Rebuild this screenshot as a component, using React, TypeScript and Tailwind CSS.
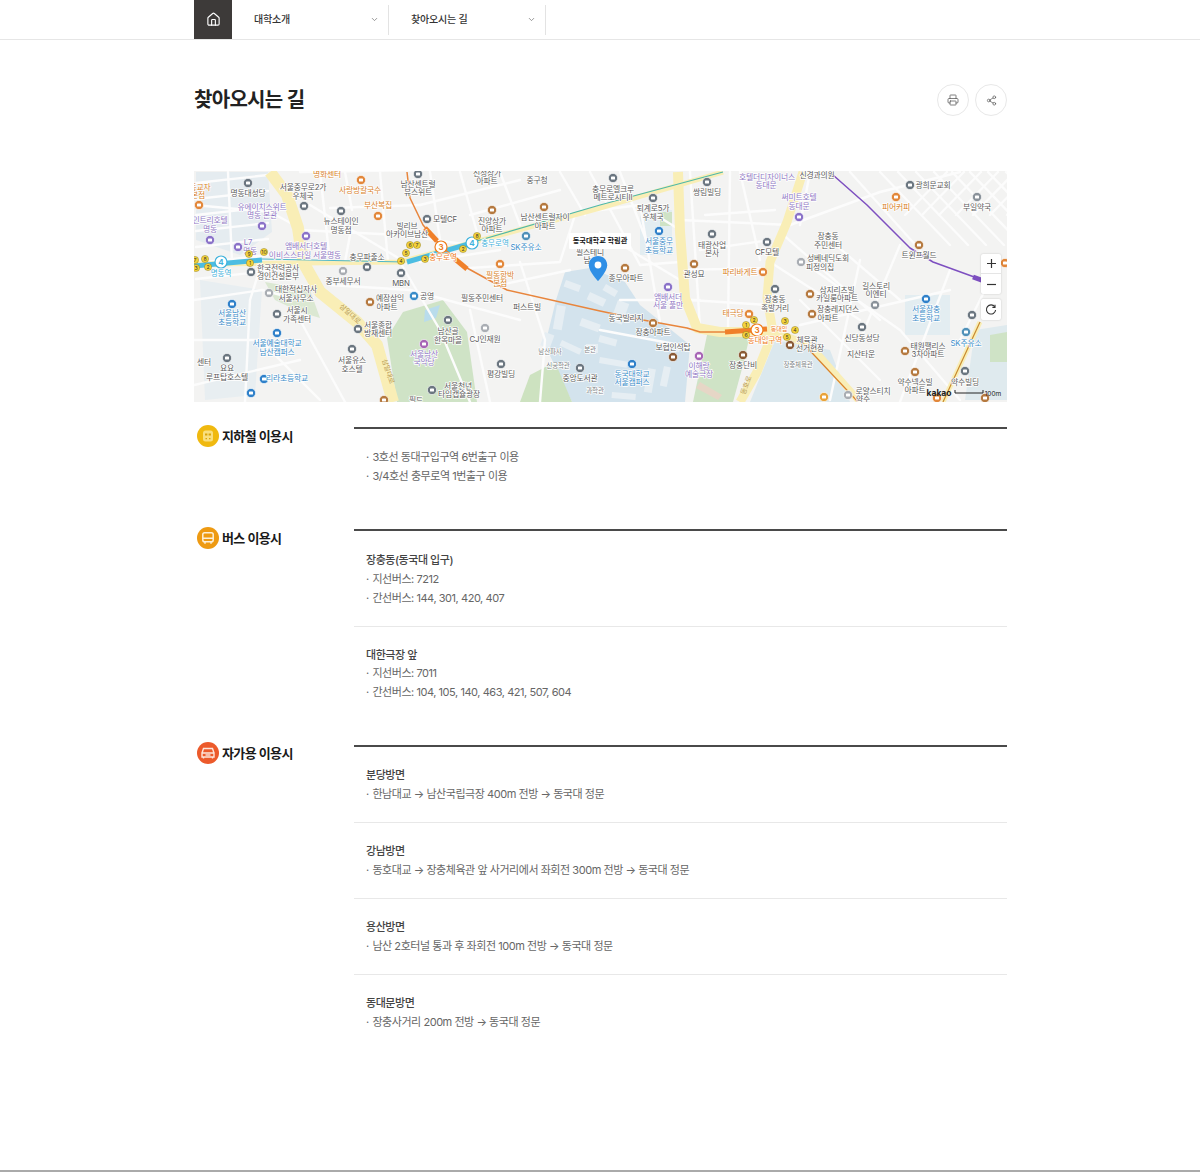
import { ChevronDown, House, Printer, Share2 } from 'lucide-react'
import type { ReactNode } from 'react'

const FONT = 'Inter, "Noto Sans CJK KR", "Noto Sans", sans-serif'

const GRAY = '#5a5a5a'
const ORANGE = '#d9822b'
const PURPLE = '#8f78c4'
const BLUE = '#3a8cc9'

// [x, y, text, color]
const labels: [number, number, string, string?][] = [
  [327, 174, '명화센터', ORANGE], [200, 187, '동교자', ORANGE], [198, 195, '본점', ORANGE],
  [248, 193, '명동대성당'], [303, 187, '서울중무로2가'], [303, 196, '우체국'],
  [360, 190, '사랑방칼국수', ORANGE], [418, 184, '남산센트럴'], [418, 192, '뷰스위트'],
  [487, 173, '신성상가'], [487, 181, '아파트'], [537, 180, '중구청'],
  [378, 205, '부산복집', ORANGE], [262, 207, '유에이치스위트', PURPLE], [262, 215, '명동 본관', PURPLE],
  [210, 220, '인트리호텔', PURPLE], [210, 229, '명동', PURPLE], [341, 221, '뉴스테이인'], [341, 230, '명동점'],
  [445, 219, '모텔CF'], [407, 226, '빌리브'], [407, 234, '아카이브남산'],
  [492, 221, '진양상가'], [492, 229, '아파트'], [545, 217, '남산센트럴자이'], [545, 226, '아파트'],
  [248, 242, 'L7', PURPLE], [250, 251, '명동', PURPLE], [306, 246, '앰배서더호텔', PURPLE],
  [305, 255, '이비스스타일 서울명동', PURPLE], [367, 257, '충무파출소'],
  [278, 268, '한국전력공사'], [278, 276, '경인건설본부'], [343, 281, '중부세무서'], [401, 283, 'MBN'],
  [526, 247, 'SK주유소', BLUE], [500, 275, '필동함박', ORANGE], [500, 283, '본점', ORANGE],
  [296, 289, '대한적십자사'], [296, 298, '서울사무소'], [390, 298, '예장삼익'], [387, 307, '아파트'],
  [427, 296, '공영'], [482, 298, '필동주민센터'], [527, 307, '퍼스트빌'],
  [232, 313, '서울남산', BLUE], [232, 322, '초등학교', BLUE], [297, 310, '서울시'], [297, 319, '가족센터'],
  [277, 343, '서울예술대학교', BLUE], [277, 352, '남산캠퍼스', BLUE],
  [378, 325, '서울종합'], [378, 333, '방재센터'], [448, 331, '남산골'], [448, 340, '한옥마을'],
  [485, 339, 'CJ인재원'], [424, 354, '서울남산', PURPLE], [424, 362, '국악당', PURPLE],
  [352, 360, '서울유스'], [352, 369, '호스텔'], [204, 362, '센터'], [227, 368, '요요'], [227, 377, '루프탑호스텔'],
  [287, 378, '리라초등학교', BLUE], [501, 374, '평강빌딩'], [458, 386, '서울천년'], [459, 394, '타임캡슐광장'],
  [416, 400, '필드'], [580, 378, '중앙도서관'],
  [767, 177, '호텔더디자이너스', PURPLE], [766, 185, '동대문', PURPLE], [817, 175, '신경과의원'],
  [707, 192, '쌍림빌딩'], [613, 189, '충무로엘크루'], [613, 197, '메트로시티II'],
  [653, 208, '퇴계로5가'], [653, 217, '우체국'], [799, 197, '써미트호텔', PURPLE], [799, 206, '동대문', PURPLE],
  [896, 207, '피어커피', ORANGE], [933, 185, '광희문교회'], [977, 207, '부일약국'],
  [659, 241, '서울중무', BLUE], [659, 250, '초등학교', BLUE], [712, 245, '태광산업'], [712, 253, '본사'],
  [767, 252, 'CF모텔'], [828, 236, '장충동'], [828, 245, '주민센터'], [828, 258, '성베네딕도회'], [820, 267, '피정의집'],
  [919, 255, '트윈프월드'], [694, 274, '관성묘'], [740, 272, '파리바게트', ORANGE],
  [668, 297, '앰배서더', PURPLE], [668, 305, '서울 풀만', PURPLE], [626, 278, '종무아파트'],
  [775, 299, '장충동'], [775, 308, '족발거리'], [837, 290, '삼지리츠빌'], [837, 298, '카일룸아파트'],
  [876, 286, '길스토리'], [876, 294, '이엔티'], [838, 309, '장충레지던스'], [828, 318, '아파트'],
  [926, 309, '서울장충', BLUE], [926, 318, '초등학교', BLUE], [626, 318, '동국빌리지'], [653, 332, '장충아파트'],
  [733, 313, '태극당', ORANGE], [862, 338, '신당동성당'], [861, 354, '지산타운'],
  [928, 346, '태원팰리스'], [928, 354, '3차아파트'], [966, 343, 'SK주유소', BLUE], [673, 347, '보협인석탑'],
  [699, 366, '이해랑', PURPLE], [699, 374, '예술극장', PURPLE], [743, 365, '장충단비'],
  [807, 340, '체육관'], [810, 348, '선거현장'], [632, 374, '동국대학교', BLUE], [632, 382, '서울캠퍼스', BLUE],
  [915, 382, '약수넥스빌'], [915, 390, '아파트'], [965, 382, '약수빌딩'], [873, 391, '로얄스티치'], [863, 399, '약수'],
  [590, 252, '필스테니'], [587, 260, '남'],
]

const smallLabels: [number, number, string][] = [
  [550, 351, '남산파사'], [590, 349, '본관'], [558, 365, '신공학관'], [595, 390, '과학관'], [798, 364, '장충체육관'],
]

// [x, y, color]
const pois: [number, number, string][] = [
  [248, 183, '#6b7680'], [304, 206, '#6b7680'], [361, 180, '#e2873a'], [418, 174, '#6b7680'],
  [378, 216, '#e2873a'], [262, 226, '#8a72c8'], [210, 240, '#8a72c8'], [199, 205, '#e2873a'], [341, 211, '#6b7680'],
  [427, 219, '#6b7680'], [492, 210, '#b5793f'], [544, 207, '#b5793f'], [238, 247, '#8a72c8'], [306, 236, '#8a72c8'],
  [367, 267, '#6b7680'], [251, 272, '#6b7680'], [343, 271, '#a9adb3'], [401, 273, '#6b7680'], [526, 236, '#4f90b8'],
  [500, 264, '#e2873a'], [269, 293, '#a9adb3'], [370, 302, '#b5793f'], [414, 296, '#3a8cc9'], [232, 304, '#2f80c9'],
  [277, 314, '#6b7680'], [277, 333, '#2f80c9'], [358, 329, '#6b7680'], [448, 320, '#6b7680'], [485, 328, '#a9adb3'],
  [424, 344, '#a765b5'], [352, 349, '#6b7680'], [227, 358, '#6b7680'], [264, 379, '#2f80c9'], [501, 364, '#6b7680'],
  [432, 390, '#6b7680'], [251, 393, '#2f80c9'], [580, 368, '#6b7680'], [384, 400, '#b5793f'],
  [707, 182, '#6b7680'], [613, 178, '#6b7680'], [653, 198, '#6b7680'], [799, 217, '#8a72c8'], [896, 197, '#e2873a'],
  [910, 185, '#6b7680'], [977, 197, '#8a929a'], [659, 231, '#2f80c9'], [712, 234, '#6b7680'], [767, 242, '#6b7680'],
  [801, 262, '#a9adb3'], [919, 245, '#b5793f'], [694, 264, '#b5793f'], [763, 272, '#e2873a'], [668, 287, '#8a72c8'],
  [625, 268, '#b5793f'], [775, 289, '#6b7680'], [810, 294, '#b5793f'], [875, 305, '#8a929a'], [812, 314, '#b5793f'],
  [926, 299, '#2f80c9'], [653, 323, '#b5793f'], [749, 314, '#e2873a'], [862, 327, '#6b7680'], [905, 351, '#b5793f'],
  [966, 332, '#4f90b8'], [673, 357, '#8a5a35'], [699, 356, '#a765b5'], [743, 355, '#8a5a35'], [790, 345, '#8a5a35'],
  [632, 364, '#2f80c9'], [915, 372, '#b5793f'], [965, 371, '#6b7680'], [848, 395, '#a9adb3'], [824, 397, '#e8a33a'],
  [937, 398, '#e2873a'], [985, 398, '#b5793f'], [1005, 263, '#e2873a'], [972, 315, '#6b7680'],
]

// [x, y, number]
const exits: [number, number, number][] = [
  [195, 260, 7], [205, 259, 8], [208, 267, 2], [196, 268, 3], [249, 254, 9], [264, 252, 10], [250, 263, 1],
  [401, 261, 4], [406, 253, 5], [410, 245, 6], [417, 245, 7], [425, 259, 3], [463, 249, 2], [477, 236, 8],
  [746, 325, 1], [754, 320, 2], [746, 335, 6], [785, 321, 3], [795, 330, 4], [787, 337, 5],
]

const streets = [
  'M194 205 L270 212 L300 228', 'M194 300 L262 290 L300 300', 'M228 172 L232 262', 'M262 262 L250 300 L245 402',
  'M300 230 L400 235 L470 245', 'M320 172 L330 262', 'M380 172 L388 262', 'M430 172 L440 240', 'M460 172 L478 236',
  'M500 172 L520 225', 'M560 172 L585 215', 'M330 208 L420 205', 'M300 172 L420 170', 'M400 262 L440 330 L470 402',
  'M330 285 L410 290 L520 320', 'M470 268 L560 262 L575 215', 'M520 262 L545 340 L540 402', 'M560 215 L640 205 L680 230',
  'M590 172 L640 265', 'M620 172 L650 250', 'M640 265 L680 262', 'M600 232 L680 280', 'M640 205 L660 322',
  'M690 172 L700 328', 'M730 172 L728 330', 'M680 220 L790 225', 'M680 270 L770 268', 'M690 300 L768 305',
  'M790 225 L880 192 L960 172', 'M800 260 L900 330 L960 400', 'M830 240 L900 300', 'M770 262 L860 320', 'M850 172 L920 250',
  'M800 300 L880 380', 'M860 260 L830 400', 'M900 245 L860 340', 'M950 270 L900 402', 'M990 280 L960 340', 'M800 325 L950 290',
  'M780 232 L880 320', 'M194 340 L260 340 L320 400', 'M300 320 L345 402', 'M194 385 L300 360', 'M600 330 L680 345', 'M620 300 L700 300',
  'M310 205 L405 262', 'M345 172 L352 210', 'M350 235 L345 262', 'M420 262 L500 250', 'M500 285 L570 270', 'M470 310 L490 402',
  'M520 180 L420 205', 'M560 190 L470 215', 'M740 172 L760 260', 'M705 215 L775 210', 'M700 250 L770 240', 'M810 172 L800 225',
]

// Parallel back streets of the Sindang blocks, top right of the map
const hatchA = Array.from({ length: 9 }, (_, i) => {
  const x = 905 + i * 17
  return `M${x} 215 L${x + 42} 172`
})
const hatchB = Array.from({ length: 8 }, (_, i) => {
  const x = 880 + i * 18
  return `M${x} 172 L${x + 70} 245`
})
const hatchC = Array.from({ length: 7 }, (_, i) => {
  const y = 175 + i * 16
  return `M196 ${y + 8} L268 ${y}`
})

const buildings: [number, number, number, number, number][] = [
  [566, 280, 16, 7, 20], [590, 292, 18, 8, 25], [606, 284, 14, 7, 30], [618, 300, 12, 22, 20], [582, 318, 20, 8, 20],
  [600, 335, 18, 7, 15], [557, 305, 9, 24, 10], [586, 344, 12, 9, 0], [600, 357, 28, 6, 10], [648, 368, 8, 24, 10],
  [664, 366, 7, 20, 12], [612, 392, 24, 6, 5], [562, 340, 22, 6, 25], [545, 332, 10, 14, 20], [660, 340, 22, 5, 20],
]

function StationBadge({ x, y, n, color }: { x: number; y: number; n: number; color: string }) {
  return (
    <g>
      <circle cx={x} cy={y} r={6} fill="#fff" stroke={color} strokeWidth={1.2} />
      <text x={x} y={y + 2.8} fontSize={8} textAnchor="middle" fill={color} fontWeight={700}>{n}</text>
    </g>
  )
}

function KakaoMap() {
  return (
    <div className="relative h-[231px] overflow-hidden">
      <svg viewBox="194 171 813 231" className="block h-full w-full" style={{ fontFamily: FONT }}>
        <rect x="194" y="171" width="813" height="231" fill="#f3f3f2" />

        {/* water / blocks */}
        <path d="M196 172 L268 172 L272 232 L240 255 L196 240 Z" fill="#e5ecf0" />
        <path d="M200 280 L262 290 L255 395 L205 400 Z" fill="#e8eef1" />
        <path d="M565 272 L590 268 L625 282 L640 305 L690 345 L685 402 L572 402 L545 345 L556 300 Z" fill="#d3e3ed" />
        <path d="M640 210 L672 210 L672 255 L640 255 Z" fill="#e3edf1" />
        <path d="M775 340 L830 350 L850 402 L750 402 Z" fill="#dbe8ee" />
        <path d="M905 295 L950 295 L950 335 L905 335 Z" fill="#e3edf1" />
        <path d="M975 330 L1007 325 L1007 400 L965 400 Z" fill="#dfeaee" />

        {/* parks */}
        <path d="M387 338 L403 312 L443 300 L467 332 L477 402 L397 402 Z" fill="#cfe3c6" />
        <path d="M425 310 L440 305 L436 318 L424 322 Z" fill="#b9dcec" />
        <path d="M520 402 L530 375 L555 362 L572 402 Z" fill="#cde2c0" />
        <path d="M707 335 L750 335 L743 365 L733 402 L693 402 Z" fill="#cfe3c6" />
        <path d="M700 382 L722 395 L718 400 L696 388 Z" fill="#e6d6c6" />
        <path d="M660 212 L672 212 L672 226 L660 226 Z" fill="#cfe3c6" />
        <path d="M265 282 L310 290 L320 318 L300 312 L275 300 Z" fill="#dbe8d2" />
        <path d="M990 335 L1007 332 L1007 362 L990 362 Z" fill="#cfe3c6" />

        {/* campus buildings */}
        {buildings.map(([x, y, w, h, r]) => (
          <rect key={`${x}-${y}`} x={x} y={y} width={w} height={h} fill="#e6eef3" transform={`rotate(${r} ${x} ${y})`} />
        ))}

        {/* streets */}
        <g fill="none" stroke="#fcfcfc" strokeWidth={2.4} strokeLinecap="round" strokeLinejoin="round">
          {streets.map((d) => <path key={d} d={d} />)}
          {hatchA.map((d) => <path key={d} d={d} />)}
          {hatchB.map((d) => <path key={d} d={d} />)}
          {hatchC.map((d) => <path key={d} d={d} />)}
        </g>

        {/* main roads */}
        <g fill="none" stroke="#f9eeb6" strokeLinejoin="round" strokeLinecap="butt">
          <path d="M270 172 L287 195 L298 228 L303 262 L320 292 L357 322 L377 345 L393 402" strokeWidth={12} />
          <path d="M678 172 L680 232 L685 298 L697 328 L720 332 L773 332" strokeWidth={10} />
          <path d="M803 172 L787 222 L770 262 L767 298 L773 332 L757 372 L740 402" strokeWidth={9} />
          <path d="M194 264 L400 262 L600 208 L723 172" strokeWidth={5} />
          <path d="M775 332 L810 345 L860 402" strokeWidth={7} />
          <path d="M980 322 L943 402" strokeWidth={5} />
        </g>
        <path d="M980 322 L943 402" fill="none" stroke="#c98a2e" strokeWidth={1.2} />
        <path d="M800 340 L858 402" fill="none" stroke="#d9822b" strokeWidth={1.2} />

        {/* road names */}
        <g fontSize={7} fill="#b89c58">
          <text x={339} y={307} transform="rotate(42 339 307)">삼일대로</text>
          <text x={382} y={360} transform="rotate(72 382 360)">삼일대로</text>
          <text x={745} y={395} transform="rotate(-70 745 395)">동호로</text>
        </g>

        {/* subway lines */}
        <g fill="none" strokeLinecap="butt" strokeLinejoin="round">
          <path d="M262 259 L405 262" stroke="#4fb8c8" strokeWidth={1.2} />
          <path d="M470 243 L600 205 L723 172" stroke="#4fb8a8" strokeWidth={1.2} />
          <path d="M194 266 L262 260" stroke="#4cbde2" strokeWidth={5} />
          <path d="M407 262 L472 243" stroke="#4cbde2" strokeWidth={5} />
          <path d="M407 172 L410 198 L423 225 L442 247 L467 268 L507 290 L600 311 L643 320 L687 328 L700 332 L725 332" stroke="#e8853c" strokeWidth={1.5} />
          <path d="M425 228 L437 241" stroke="#f0802a" strokeWidth={5} />
          <path d="M455 259 L467 269" stroke="#f0802a" strokeWidth={5} />
          <path d="M725 332 L767 329" stroke="#f0802a" strokeWidth={5} />
          <path d="M833 175 L867 205 L910 248 L933 262 L977 278 L985 280" stroke="#7d4fc0" strokeWidth={1.5} />
          <path d="M973 277 L984 281" stroke="#7d4fc0" strokeWidth={5} />
        </g>

        {/* poi markers */}
        {pois.map(([x, y, c]) => (
          <g key={`${x}-${y}`}>
            <circle cx={x} cy={y} r={4.6} fill={c} stroke="#fff" strokeWidth={0.6} />
            <rect x={x - 2} y={y - 1.6} width={4} height={3.2} rx={0.7} fill="#fff" />
          </g>
        ))}

        {/* place names */}
        <g fontSize={7.8} textAnchor="middle" letterSpacing={-0.15} stroke="#fff" strokeWidth={1.4} strokeLinejoin="round" style={{ paintOrder: 'stroke' }}>
          {labels.map(([x, y, t, c]) => (
            <text key={`${x}-${y}-${t}`} x={x} y={y + 3} fill={c ?? GRAY}>{t}</text>
          ))}
          {smallLabels.map(([x, y, t]) => (
            <text key={`${x}-${y}-${t}`} x={x} y={y + 2.5} fill="#7b7f84" fontSize={6.5}>{t}</text>
          ))}
        </g>

        {/* stations */}
        <StationBadge x={221} y={262} n={4} color="#3fb2dc" />
        <StationBadge x={472} y={243} n={4} color="#3fb2dc" />
        <StationBadge x={441} y={247} n={3} color="#ef7c1c" />
        <StationBadge x={757} y={330} n={3} color="#ef7c1c" />
        <g fontSize={7.5} textAnchor="middle" stroke="#fff" strokeWidth={1.4} style={{ paintOrder: 'stroke' }}>
          <text x={221} y={276} fill="#3fb2dc">명동역</text>
          <text x={495} y={246} fill="#3fb2dc">충무로역</text>
          <text x={443} y={260} fill="#ef7c1c">충무로역</text>
          <text x={765} y={343} fill="#ef7c1c">동대입구역</text>
          <text x={779} y={331} fill="#ef7c1c" fontSize={6}>동대입</text>
        </g>

        {/* exit numbers */}
        {exits.map(([x, y, n]) => (
          <g key={`${x}-${y}`}>
            <circle cx={x} cy={y} r={3.6} fill="#f5d33c" stroke="#7a6a10" strokeWidth={0.4} />
            <text x={x} y={y + 1.9} fontSize={5.2} textAnchor="middle" fill="#333">{n}</text>
          </g>
        ))}

        {/* destination */}
        <rect x="569" y="233" width="62" height="16" rx="1" fill="#fff" />
        <text x={600} y={243} fontSize={7.2} fontWeight={700} textAnchor="middle" fill="#111">동국대학교 학림관</text>
        <path d="M598 256 C592.5 256 588.8 260.2 588.8 265.2 C588.8 271.5 598 281 598 281 C598 281 607.2 271.5 607.2 265.2 C607.2 260.2 603.5 256 598 256 Z" fill="#2f8fe6" />
        <circle cx={598} cy={265} r={3.4} fill="#fff" />

        {/* kakao logo + scale */}
        <text x={939} y={396} fontSize={8.5} fontWeight={700} textAnchor="middle" fill="#222">kakao</text>
        <path d="M955 390 V393 H983 V390" fill="none" stroke="#222" strokeWidth={1} />
        <text x={993} y={396} fontSize={6.5} textAnchor="middle" fill="#222">100m</text>
      </svg>

      {/* map controls */}
      <div className="absolute left-[787px] top-[83px] flex w-[20px] flex-col items-center rounded-[2px] bg-white shadow-[0_0_2px_rgba(0,0,0,0.2)]">
        <span className="flex h-[20px] w-full items-center justify-center border-b border-[#e5e5e5]">
          <svg width="11" height="11" viewBox="0 0 11 11"><path d="M5.5 1v9M1 5.5h9" stroke="#333" strokeWidth="1.2" /></svg>
        </span>
        <span className="flex h-[20px] w-full items-center justify-center">
          <svg width="11" height="11" viewBox="0 0 11 11"><path d="M1 5.5h9" stroke="#333" strokeWidth="1.2" /></svg>
        </span>
      </div>
      <div className="absolute left-[787px] top-[128px] flex h-[21px] w-[20px] items-center justify-center rounded-[2px] bg-white shadow-[0_0_2px_rgba(0,0,0,0.2)]">
        <svg width="12" height="12" viewBox="0 0 12 12" fill="none">
          <path d="M9.8 2.8A4.6 4.6 0 1 0 10.6 6" stroke="#333" strokeWidth="1.1" />
          <path d="M10 .8v2.6H7.4" stroke="#333" strokeWidth="1.1" />
        </svg>
      </div>
    </div>
  )
}

function SubwayIcon() {
  return (
    <svg width="14" height="14" viewBox="0 0 14 14">
      <rect x="2" y="1.5" width="10" height="11" rx="2.5" fill="#f9df80" />
      <path d="M4 4.5h2.4v2H4zM7.6 4.5H10v2H7.6z" fill="#d9a40c" />
      <path d="M4.5 9.7h1.5M8 9.7h1.5" stroke="#d9a40c" strokeWidth="1.2" />
    </svg>
  )
}

function BusIcon() {
  return (
    <svg width="14" height="14" viewBox="0 0 14 14" fill="none" stroke="#fdf0d8" strokeWidth="1.5">
      <rect x="1.8" y="1.8" width="10.4" height="9" rx="1.8" />
      <path d="M1.8 7.2h10.4M4 11v1.8M10 11v1.8" />
    </svg>
  )
}

function CarIcon() {
  return (
    <svg width="16" height="14" viewBox="0 0 16 14" fill="none" stroke="#fde6dc" strokeWidth="1.4">
      <path d="M2 7l1.5-4.5h9L14 7M2 7h12v4H2zM3.5 11v1.5M12.5 11v1.5" />
      <path d="M5.5 9h5" />
    </svg>
  )
}

interface SectionProps {
  icon: ReactNode
  color: string
  title: string
  ruleClass?: string
  children: ReactNode
}

function Section({ icon, color, title, ruleClass = 'mt-[2px]', children }: SectionProps) {
  return (
    <section className="flex">
      <div className="w-[160px] shrink-0">
        <h2 className="flex items-center gap-[3px] pl-[3px] text-[13px] font-semibold leading-[22px] tracking-[-0.6px] text-[#1a1a1a]">
          <span className={`flex h-[22px] w-[22px] items-center justify-center rounded-full ${color}`}>{icon}</span>
          {title}
        </h2>
      </div>
      <div className={`${ruleClass} flex-1 border-t-2 border-[#4a4a4a]`}>{children}</div>
    </section>
  )
}

interface BlockProps {
  title?: string
  lines: string[]
  last?: boolean
  className?: string
}

function Block({ title, lines, last, className = 'pt-[19px] pb-[18.5px]' }: BlockProps) {
  return (
    <div className={`px-[12px] text-[11px] leading-[18.75px] tracking-[-0.45px] text-[#666] ${className} ${last ? '' : 'border-b border-[#e8e8e8]'}`}>
      {title && <p className="font-medium text-[#444]">{title}</p>}
      {lines.map((line) => (
        <p key={line}><span className="mr-[1px]">·</span> {line}</p>
      ))}
    </div>
  )
}

export default function App() {
  return (
    <div className="h-[1172px] border-b-2 border-[#aaa] bg-white" style={{ fontFamily: FONT }}>
      <header className="h-[40px] border-b border-[#e6e6e6]">
        <nav className="ml-[194px] flex h-[39px] w-[813px] items-center">
          <a className="flex h-full w-[38px] items-center justify-center bg-[#3d3a39] text-white">
            <House size={15} strokeWidth={1.8} />
          </a>
          <div className="flex h-[30px] w-[157px] items-center justify-between border-r border-[#e3e3e3] pl-[22px] pr-[9px] text-[10px] font-medium tracking-[-0.2px] text-[#333]">
            대학소개
            <ChevronDown size={9} strokeWidth={2} className="text-[#777]" />
          </div>
          <div className="flex h-[30px] w-[157px] items-center justify-between border-r border-[#e3e3e3] pl-[22px] pr-[9px] text-[10px] font-medium tracking-[-0.2px] text-[#333]">
            찾아오시는 길
            <ChevronDown size={9} strokeWidth={2} className="text-[#777]" />
          </div>
        </nav>
      </header>

      <main className="ml-[194px] w-[813px]">
        <div className="flex h-[131px] items-start justify-between pt-[44px]">
          <h1 className="pt-[1px] text-[20px] font-semibold leading-[30px] tracking-[-0.7px] text-[#222]">찾아오시는 길</h1>
          <div className="flex gap-[6px]">
            <button className="flex h-[32px] w-[32px] items-center justify-center rounded-full border border-[#e8e8e8] text-[#555]">
              <Printer size={12} strokeWidth={1.5} />
            </button>
            <button className="flex h-[32px] w-[32px] items-center justify-center rounded-full border border-[#e8e8e8] text-[#555]">
              <Share2 size={11} strokeWidth={1.5} />
            </button>
          </div>
        </div>

        <KakaoMap />

        <div className="mt-[23px] flex flex-col gap-[23px]">
          <Section icon={<SubwayIcon />} color="bg-[#f0b90f]" title="지하철 이용시">
            <Block lines={['3호선 동대구입구역 6번출구 이용', '3/4호선 충무로역 1번출구 이용']} last />
          </Section>
          <Section icon={<BusIcon />} color="bg-[#ee9a12]" title="버스 이용시">
            <Block className="pt-[20px] pb-[18.25px]" title="장충동(동국대 입구)" lines={['지선버스: 7212', '간선버스: 144, 301, 420, 407']} />
            <Block className="pt-[19px] pb-[17.25px]" title="대한극장 앞" lines={['지선버스: 7011', '간선버스: 104, 105, 140, 463, 421, 507, 604']} last />
          </Section>
          <Section icon={<CarIcon />} color="bg-[#ec5a2b]" title="자가용 이용시" ruleClass="mt-[3px]">
            <Block title="분당방면" lines={['한남대교 → 남산국립극장 400m 전방 → 동국대 정문']} />
            <Block title="강남방면" lines={['동호대교 → 장충체육관 앞 사거리에서 좌회전 300m 전방 → 동국대 정문']} />
            <Block title="용산방면" lines={['남산 2호터널 통과 후 좌회전 100m 전방 → 동국대 정문']} />
            <Block title="동대문방면" lines={['장충사거리 200m 전방 → 동국대 정문']} last />
          </Section>
        </div>
      </main>
    </div>
  )
}
